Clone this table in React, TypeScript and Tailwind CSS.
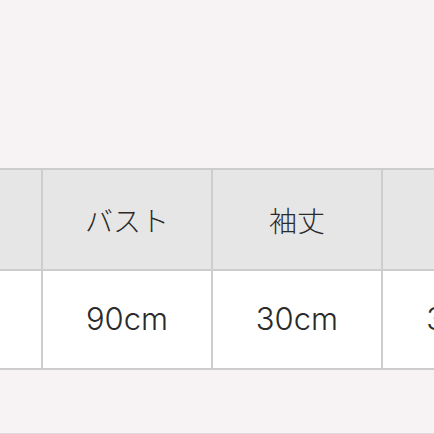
const headers = ['', 'バスト', '袖丈', '着丈']
const values = ['', '90cm', '30cm', '35cm']

function Cell({ children, head, last }: { children: React.ReactNode; head?: boolean; last?: boolean }) {
  return (
    <div
      className={
        'flex h-[101px] w-[170px] shrink-0 items-center justify-center border-l-2 border-t-2 border-[#cdcdcd] ' +
        (head ? 'bg-[#e6e6e6] text-[28px] ' : 'bg-white text-[31px] ') +
        (last ? 'border-b-2' : '')
      }
    >
      {children}
    </div>
  )
}

export default function App() {
  return (
    <div
      className="h-[434px] w-[434px] overflow-hidden border-b border-[#dedadb] bg-[#f7f2f3] pt-[168px] text-[#2b2b2b]"
      style={{ fontFamily: 'Inter, "Noto Sans CJK JP", sans-serif' }}
    >
      <div className="-ml-[129px] flex w-max flex-col">
        <div className="flex">
          {headers.map((h, i) => (
            <Cell key={i} head>
              <span className="font-light" style={{ fontFamily: '"Noto Sans CJK JP", sans-serif' }}>
                {h}
              </span>
            </Cell>
          ))}
        </div>
        <div className="flex">
          {values.map((v, i) => (
            <Cell key={i} last>
              <span className="font-light">{v}</span>
            </Cell>
          ))}
        </div>
      </div>
    </div>
  )
}
